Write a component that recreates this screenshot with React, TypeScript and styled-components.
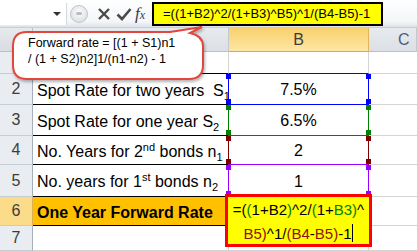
import type { ReactNode } from "react";
import styled, { createGlobalStyle } from "styled-components";

const GlobalStyle = createGlobalStyle`
  html, body { margin: 0; padding: 0; background: #fff; overflow: hidden; }
  body { font-family: "Liberation Sans", Arial, sans-serif; }
`;

const BLUE = "#0000ff";
const GREEN = "#008000";
const MAROON = "#800000";
const PURPLE = "#9900ff";

type Range = { side: string; bottom: string; handle: string };

function App() {
  const rows = [
    { n: 2, label: <>Spot Rate for two years&nbsp;&nbsp;S<Sub>1</Sub></>, value: "7.5%", range: { side: BLUE, bottom: BLUE, handle: BLUE } },
    { n: 3, label: <>Spot Rate for one year S<Sub>2</Sub></>, value: "6.5%", range: { side: GREEN, bottom: GREEN, handle: GREEN } },
    { n: 4, label: <>No. Years for 2<Sup>nd</Sup> bonds n<Sub>1</Sub></>, value: "2", range: { side: MAROON, bottom: PURPLE, handle: MAROON } },
    { n: 5, label: <>No. years for 1<Sup>st</Sup> bonds n<Sub>2</Sub></>, value: "1", range: { side: PURPLE, bottom: "#d4d4d4", handle: PURPLE } },
  ];

  return (
    <>
      <GlobalStyle />
      <Page>
        <Toolbar>
          <NameBox>
            <Arrow />
          </NameBox>
          <Grip />
          <ToolIcon>
            <svg width="14" height="14" viewBox="0 0 14 14">
              <path d="M2 2 L12 12 M12 2 L2 12" stroke="#4a4a4a" strokeWidth="2.4" />
            </svg>
          </ToolIcon>
          <ToolIcon>
            <svg width="16" height="14" viewBox="0 0 16 14">
              <path d="M1.5 7.5 L6 12 L14.5 2" stroke="#4a4a4a" strokeWidth="2.6" fill="none" />
            </svg>
          </ToolIcon>
          <Fx>
            f<small>x</small>
          </Fx>
          <FormulaBox>=((1+B2)^2/(1+B3)^B5)^1/(B4-B5)-1</FormulaBox>
        </Toolbar>

        <Sheet>
          <Corner />
          <ColHead />
          <ColHead $active>B</ColHead>
          <ColHead $c>C</ColHead>

          <RowHead>1</RowHead>
          <ACell $line="#000" />
          <BCell $side="#d4d4d4" $bottom={BLUE} />
          <CCell />

          {rows.map((r) => (
            <Row key={r.n} n={r.n} label={r.label} value={r.value} range={r.range} />
          ))}

          <RowHead $active>6</RowHead>
          <ACell $line="#000" $fill="#ffc000" $bold>
            <span>One Year Forward Rate</span>
          </ACell>
          <BCell $side="#d4d4d4" $bottom="#d4d4d4">
            <Editor>
              <EditLine>
                =(<G>(</G>1+B2<G>)</G>^2/<G>(</G>1+<G>B3</G>
                <G>)</G>^
              </EditLine>
              <EditLine>
                <M>B5</M>
                <M>)</M>^1/<M>(</M>
                <M>B4</M>-<M>B5</M>
                <M>)</M>-1<Caret />
              </EditLine>
            </Editor>
          </BCell>
          <CCell />

          <RowHead>7</RowHead>
          <ACell />
          <BCell $side="#d4d4d4" $bottom="#d4d4d4" />
          <CCell />
        </Sheet>

        <Callout>
          <svg width="220" height="90" viewBox="0 0 220 90">
            <defs>
              <filter id="sh" x="-10%" y="-10%" width="130%" height="140%">
                <feDropShadow dx="1" dy="2" stdDeviation="1.5" floodColor="#000" floodOpacity="0.3" />
              </filter>
            </defs>
            <path
              d="M27 32 H170 L202 27 L190 33 Q203 36 203 46 V65 Q203 79 189 79 H27 Q13 79 13 65 V46 Q13 32 27 32 Z"
              fill="#fff"
              stroke="#e2463c"
              strokeWidth="2"
              filter="url(#sh)"
            />
          </svg>
          <CalloutText>
            Forward rate = [(1 + S1)n1
            <br />/ (1 + S2)n2]1/(n1-n2) - 1
          </CalloutText>
        </Callout>
      </Page>
    </>
  );
}

function Row({ n, label, value, range }: { n: number; label: ReactNode; value: string; range: Range }) {
  return (
    <>
      <RowHead>{n}</RowHead>
      <ACell $line="#000">
        <span>{label}</span>
      </ACell>
      <BCell $side={range.side} $bottom={range.bottom}>
        <span>{value}</span>
        <Handle $color={range.handle} $top $left />
        <Handle $color={range.handle} $top />
        <Handle $color={range.handle} $left />
        <Handle $color={range.handle} />
      </BCell>
      <CCell />
    </>
  );
}

export default App;

const Page = styled.div`
  position: relative;
  width: 417px;
  height: 251px;
  overflow: hidden;
  background: #fff;
`;

const Toolbar = styled.div`
  height: 28px;
  box-sizing: border-box;
  display: flex;
  align-items: center;
  background: linear-gradient(#ffffff, #f4f6f8 80%, #dfe3e8);
  border-bottom: 1px solid #c9ced6;
`;

const NameBox = styled.div`
  position: relative;
  width: 67px;
  height: 22px;
  box-sizing: border-box;
  background: #fff;
  border-right: 1px solid #d5d9df;
`;

const Arrow = styled.div`
  position: absolute;
  right: 5px;
  top: 9px;
  border-left: 4px solid transparent;
  border-right: 4px solid transparent;
  border-top: 4px solid #333;
`;

const Grip = styled.div`
  width: 18px;
  height: 18px;
  margin: 0 6px 0 3px;
  border-radius: 50%;
  background: radial-gradient(circle at 50% 40%, #fdfdfd, #d3d7dc);
  border: 1px solid #c0c5cc;
  box-sizing: border-box;
  position: relative;
  &::after {
    content: "";
    position: absolute;
    left: 5px;
    top: 6px;
    width: 6px;
    height: 3px;
    border-radius: 2px;
    background: #b7bcc3;
  }
`;

const ToolIcon = styled.div`
  width: 20px;
  display: flex;
  justify-content: center;
`;

const Fx = styled.div`
  width: 17px;
  margin-left: 1px;
  font-family: "Liberation Serif", "Times New Roman", serif;
  font-style: italic;
  font-size: 17px;
  color: #3a3a3a;
  small {
    font-size: 12px;
  }
`;

const FormulaBox = styled.div`
  margin-left: 0;
  width: 231px;
  height: 24px;
  box-sizing: border-box;
  border: 2px solid #000;
  background: #ffff00;
  font-size: 13px;
  line-height: 20px;
  padding-left: 9px;
  color: #000;
  white-space: nowrap;
  overflow: hidden;
`;

const Sheet = styled.div`
  display: grid;
  grid-template-columns: 33px 196px 140px 1fr;
  grid-template-rows: 24px 22px 31px 31px 29px 32px 29px 25px;
`;

const Corner = styled.div`
  background: linear-gradient(#e6e9ed, #d9dde3);
  border-right: 1px solid #b9c0c9;
  border-bottom: 1px solid #b9c0c9;
`;

const ColHead = styled.div<{ $active?: boolean; $c?: boolean }>`
  box-sizing: border-box;
  display: flex;
  align-items: center;
  justify-content: ${(p) => (p.$c ? "flex-start" : "center")};
  padding-left: ${(p) => (p.$c ? "29px" : "0")};
  font-size: 16px;
  color: ${(p) => (p.$c ? "#4d5d78" : "#3c3c3c")};
  background: ${(p) =>
    p.$active ? "linear-gradient(#f9d06c, #fde7a4)" : "linear-gradient(#e7eaee, #dce0e5)"};
  border-right: 1px solid ${(p) => (p.$active ? "#e3b55b" : "#c3c9d1")};
  border-bottom: 1px solid ${(p) => (p.$active ? "#e2a83a" : "#b9c0c9")};
`;

const RowHead = styled.div<{ $active?: boolean }>`
  box-sizing: border-box;
  display: flex;
  align-items: center;
  justify-content: center;
  font-size: 16px;
  color: #3c3c3c;
  background: ${(p) => (p.$active ? "#fbdc8b" : "#e9ecf0")};
  border-right: 1px solid ${(p) => (p.$active ? "#e0b050" : "#a7afba")};
  border-bottom: 1px solid #c6ccd4;
`;

const ACell = styled.div<{ $line?: string; $fill?: string; $bold?: boolean }>`
  box-sizing: border-box;
  display: flex;
  align-items: center;
  padding: 3px 0 0 4px;
  font-size: 16px;
  font-weight: ${(p) => (p.$bold ? 700 : 400)};
  color: #000;
  white-space: nowrap;
  background: ${(p) => p.$fill ?? "#fff"};
  border-bottom: 1px solid ${(p) => p.$line ?? "#d4d4d4"};
  border-right: 1px solid #d4d4d4;
`;

const BCell = styled.div<{ $side: string; $bottom: string }>`
  position: relative;
  box-sizing: border-box;
  display: flex;
  align-items: center;
  justify-content: center;
  padding-top: 2px;
  margin-left: -1px;
  font-size: 16px;
  color: #000;
  border-left: 1px solid ${(p) => p.$side};
  border-right: 1px solid ${(p) => p.$side};
  border-bottom: 1px solid ${(p) => p.$bottom};
`;

const CCell = styled.div`
  border-bottom: 1px solid #d4d4d4;
`;

const Handle = styled.span<{ $color: string; $top?: boolean; $left?: boolean }>`
  position: absolute;
  width: 5px;
  height: 5px;
  background: ${(p) => p.$color};
  ${(p) => (p.$top ? "top: 0;" : "bottom: 0;")}
  ${(p) => (p.$left ? "left: -3px;" : "right: -3px;")}
  z-index: 2;
`;

const Sub = styled.sub`
  font-size: 11px;
  vertical-align: -4px;
  line-height: 0;
`;

const Sup = styled.sup`
  font-size: 11px;
  vertical-align: 6px;
  line-height: 0;
`;

const Editor = styled.div`
  position: absolute;
  left: -4px;
  top: -3px;
  width: 147px;
  height: 53px;
  box-sizing: border-box;
  border: 3px solid #ff0000;
  background: #ffff00;
  z-index: 3;
  display: flex;
  flex-direction: column;
  align-items: center;
  padding-top: 1px;
`;

const EditLine = styled.div`
  font-size: 15px;
  line-height: 24px;
  color: #000;
  white-space: nowrap;
`;

const G = styled.span`
  color: ${GREEN};
`;

const M = styled.span`
  color: #8b1414;
`;

const Caret = styled.span`
  display: inline-block;
  width: 1px;
  height: 18px;
  margin-left: 1px;
  vertical-align: -3px;
  background: #000;
`;

const Callout = styled.div`
  position: absolute;
  left: 0;
  top: 0;
  width: 220px;
  height: 90px;
  z-index: 5;
  svg {
    position: absolute;
    left: 0;
    top: 0;
  }
`;

const CalloutText = styled.div`
  position: absolute;
  left: 28px;
  top: 35px;
  font-size: 12.5px;
  line-height: 16px;
  color: #000;
  white-space: nowrap;
`;
